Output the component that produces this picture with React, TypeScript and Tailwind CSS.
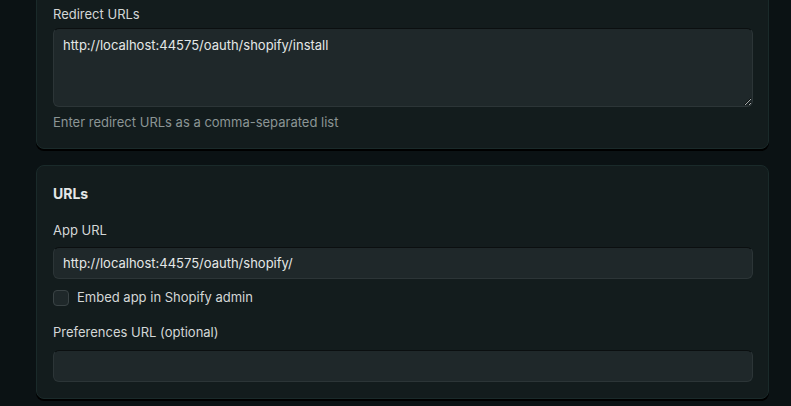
import { useState } from "react";

const inputCls =
  "block w-full rounded-md border border-[#2c3537] border-t-[#0b0f10] bg-[#1f282a] px-[9px] text-[13px] text-[#e4e7e7] outline-none";

export default function App() {
  const [embed, setEmbed] = useState(false);

  return (
    <div
      className="h-[406px] overflow-hidden bg-[#0b1214] pl-9 pr-[22px]"
      style={{ fontFamily: "Inter, 'Noto Sans', sans-serif" }}
    >
      <div className="-mt-[13px] rounded-lg border border-[#1a2a2a] bg-[#131c1d] pb-4 pl-4 pr-[15px] pt-[16px] shadow-[0_2px_0_#000]">
        <label className="block text-[13px] leading-5 text-[#d3d7d7]">Redirect URLs</label>
        <textarea
          rows={3}
          defaultValue="http://localhost:44575/oauth/shopify/install"
          className={`${inputCls} mt-1 h-[79px] py-[6px] leading-5`}
        />
        <p className="mt-[5px] text-[13px] leading-5 text-[#8b9595]">
          Enter redirect URLs as a comma-separated list
        </p>
      </div>

      <div className="mt-4 rounded-lg border border-[#1a2a2a] bg-[#131c1d] pb-4 pl-4 pr-[15px] pt-4 shadow-[0_2px_0_#000]">
        <h2 className="text-[14px] font-bold leading-6 text-[#e4e7e7]">URLs</h2>

        <label className="mt-3.5 block text-[13px] leading-5 text-[#d3d7d7]">App URL</label>
        <input
          defaultValue="http://localhost:44575/oauth/shopify/"
          className={`${inputCls} mt-[7px] h-8`}
        />

        <label className="mt-[9px] flex h-5 cursor-pointer items-center gap-2 text-[13px] text-[#d3d7d7]">
          <button
            type="button"
            aria-pressed={embed}
            onClick={() => setEmbed((v) => !v)}
            className="h-4 w-4 rounded-[4px] border border-[#3a4345] bg-[#1f282a]"
          />
          Embed app in Shopify admin
        </label>

        <label className="mt-[14px] block text-[13px] leading-5 text-[#d3d7d7]">Preferences URL (optional)</label>
        <input className={`${inputCls} mt-2 h-8`} />
      </div>
    </div>
  );
}
